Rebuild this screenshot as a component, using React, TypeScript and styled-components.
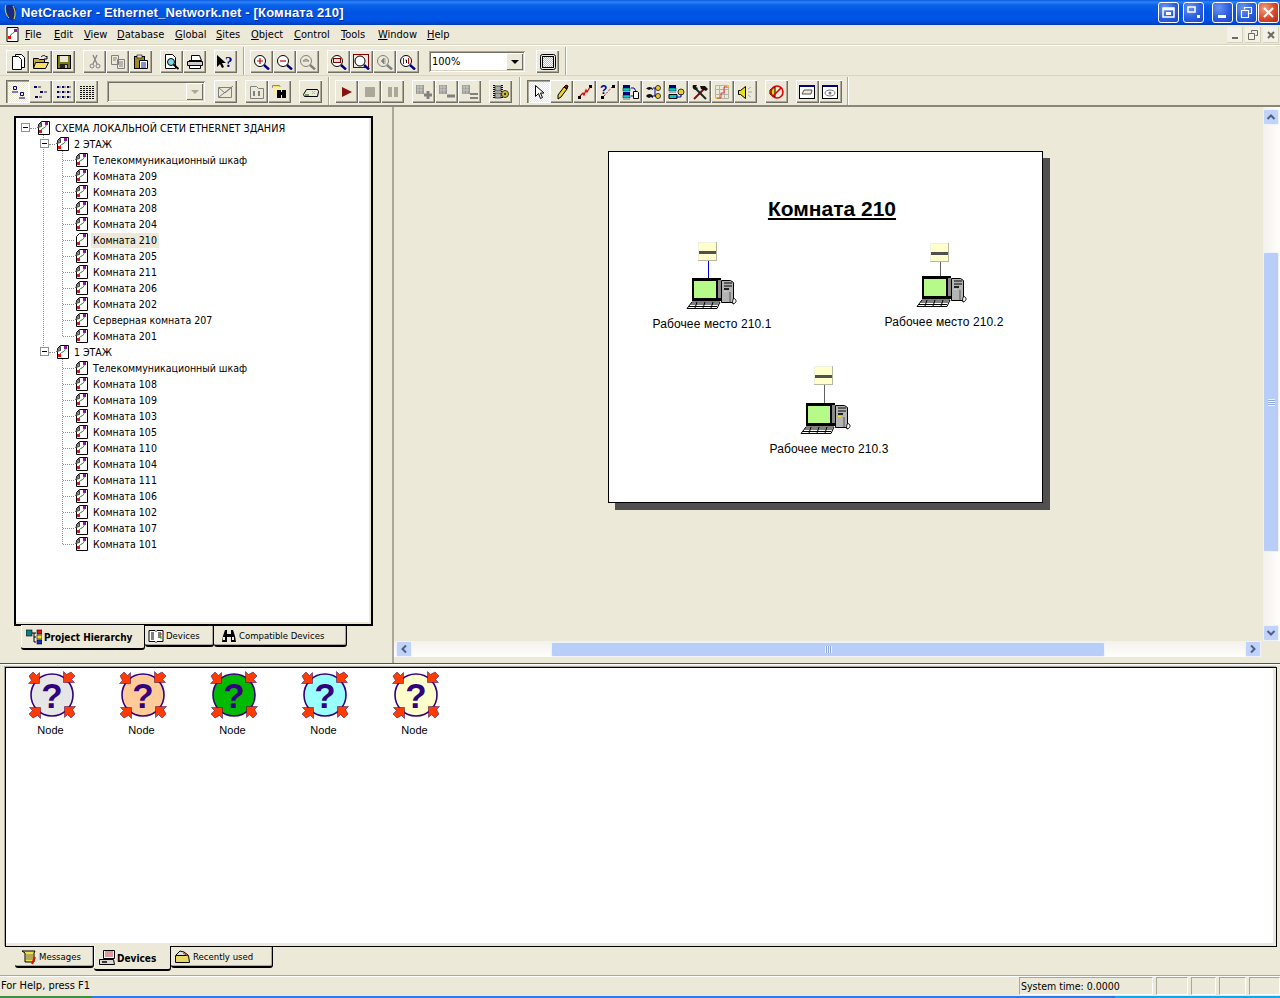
import React from 'react';
import styled, { createGlobalStyle } from 'styled-components';

const UI = `"DejaVu Sans Condensed", "Liberation Sans", sans-serif`;
const BG = '#ece9d8';

const Global = createGlobalStyle`
  html, body { margin: 0; padding: 0; overflow: hidden; background: ${BG}; }
  * { box-sizing: border-box; }
`;

const Win = styled.div`
  width: 1280px; height: 998px; background: ${BG}; display: flex; flex-direction: column;
  overflow: hidden; font: 11px ${UI}; color: #000;
`;

/* ---------- title bar ---------- */
const TitleBar = styled.div`
  height: 25px; flex: none; display: flex; align-items: center; padding: 0 0 0 3px;
  background: linear-gradient(180deg,#0a5ae0 0,#2d83f5 2px,#0a62ea 5px,#0054e3 12px,#0055e8 19px,#0048d0 23px,#003bb0 25px);
`;
const TitleText = styled.span`
  font: bold 13px "Liberation Sans", sans-serif; color: #fff; margin-left: 4px; flex: 1; letter-spacing: .16px;
  text-shadow: 1px 1px 0 #0a2f9c; white-space: nowrap;
`;
const CapBtn = styled.div<{ $ml: number; $red?: boolean }>`
  width: 21px; height: 21px; margin-left: ${p => p.$ml}px; border: 1px solid #fff; border-radius: 3px;
  display: flex; align-items: center; justify-content: center;
  background: ${p => p.$red
    ? 'radial-gradient(circle at 30% 30%,#f0a080,#d8482a 55%,#b02a10)'
    : 'radial-gradient(circle at 30% 25%,#6a94f0,#2a5ee0 55%,#1c44c0)'};
`;

/* ---------- menu ---------- */
const MenuBar = styled.div`
  height: 20px; flex: none; display: flex; align-items: center; padding-left: 5px;
  border-bottom: 1px solid #d8d4c0;
`;
const MenuItem = styled.span<{ $w: number }>`
  width: ${p => p.$w}px; flex: none; white-space: nowrap;
  & u { text-decoration: underline; }
`;
const Spacer = styled.div`flex: 1;`;
const MdiBtn = styled.div`
  width: 16px; height: 16px; margin-left: 2px; background: #f4f2e8; box-shadow: inset -1px -1px 0 #d4d0bc;
  display: flex; align-items: center; justify-content: center;
`;

/* ---------- toolbars ---------- */
const ToolRow = styled.div<{ $last?: boolean }>`
  height: ${p => (p.$last ? 32 : 30)}px; flex: none; display: flex; align-items: flex-start; padding-top: 4px; padding-left: 6px;
  border-top: 1px solid ${p => (p.$last ? '#d8d4c0' : '#fff')};
  border-bottom: ${p => (p.$last ? '2px solid #8a877a' : '0')};
`;
const Gap = styled.div<{ $w: number }>`width: ${p => p.$w}px; flex: none;`;
const Sep = styled.div<{ $ml: number; $mr: number }>`
  width: 2px; height: 28px; margin: -3px ${p => p.$mr}px 0 ${p => p.$ml}px; flex: none;
  background: linear-gradient(90deg,#aca899 50%,#fff 50%);
`;
const TB = styled.div<{ $on?: boolean }>`
  width: 23px; height: 23px; flex: none; display: flex; align-items: center; justify-content: center;
  background: ${p => (p.$on ? 'repeating-conic-gradient(#fff 0 25%,#ece9d8 0 50%) 0 0/2px 2px' : BG)};
  box-shadow: ${p => p.$on
    ? 'inset 1px 1px 0 #716f64, inset 2px 2px 0 #aca899, inset -1px -1px 0 #fff'
    : 'inset 1px 1px 0 #fff, inset -1px -1px 0 #716f64, inset -2px -2px 0 #aca899'};
`;
const Combo = styled.div<{ $w: number; $off?: boolean }>`
  width: ${p => p.$w}px; height: 21px; flex: none; margin-top: 1px; display: flex; align-items: center; justify-content: space-between;
  background: ${p => (p.$off ? BG : '#fff')};
  box-shadow: inset 1px 1px 0 #aca899, inset -1px -1px 0 #fff, inset 2px 2px 0 #716f64, inset -2px -2px 0 #d8d4c0;
  padding: 2px; font-size: 11px;
  & > span { padding-left: 1px; }
`;
const ComboBtn = styled.div<{ $off?: boolean }>`
  width: 17px; height: 17px; background: ${BG}; box-shadow: inset 1px 1px 0 #fff, inset -1px -1px 0 #716f64;
  display: flex; align-items: center; justify-content: center;
  &::after { content: ''; border: 4px solid transparent; border-top: 4px solid ${p => (p.$off ? '#aca899' : '#000')}; border-bottom: 0; }
`;

/* ---------- main ---------- */
const Main = styled.div`height: 557px; flex: none; display: flex; border-bottom: 1px solid #55534a;`;
const LeftPane = styled.div`
  width: 394px; flex: none; padding: 9px 0 0 14px; border-right: 2px solid #aca899;
  display: flex; flex-direction: column;
`;
const TreeBox = styled.div`
  width: 359px; height: 510px; background: #fff; padding: 2px 0 0 3px; flex: none; overflow: hidden;
  border: 2px solid #000;
  box-shadow: inset -2px -2px 0 #ece9d8, inset -3px -3px 0 #fff;
`;
const TreeRow = styled.div<{ $level: number }>`
  height: 16px; display: flex; align-items: center; position: relative; white-space: nowrap;
  padding-left: ${p => p.$level * 19 + 17}px;
  font-size: 10.5px;
`;
const Expander = styled.span<{ $left: number }>`
  position: absolute; left: ${p => p.$left}px; width: 9px; height: 9px; border: 1px solid #919191; background: #fff;
  top: 3px;
  &::after { content: ''; position: absolute; left: 1px; top: 3px; width: 5px; height: 1px; background: #000; }
`;
const Hline = styled.span<{ $left: number; $w: number }>`
  position: absolute; top: 8px; left: ${p => p.$left}px; width: ${p => p.$w}px; height: 0; border-top: 1px dotted #8f8f8f;
`;
const TreeLabel = styled.span<{ $sel?: boolean; $root?: boolean }>`
  margin-left: 2px; padding: 0 2px; height: 15px; line-height: 15px;
  font-size: ${p => (p.$root ? 10.75 : 10.5)}px;
  background: ${p => (p.$sel ? '#ece9d8' : 'transparent')};
`;
const Branch = styled.div<{ $left: number; $h: number }>`
  position: relative;
  &::before { content: ''; position: absolute; left: ${p => p.$left}px; top: -1px; height: ${p => p.$h}px; border-left: 1px dotted #8f8f8f; }
`;
const TabStrip = styled.div<{ $ml: number }>`display: flex; align-items: flex-start; padding-left: ${p => p.$ml}px; flex: none;`;
const Tab = styled.div<{ $w: number; $pl: number; $on?: boolean }>`
  width: ${p => p.$w}px; flex: none; height: ${p => (p.$on ? 25 : 21)}px; margin-top: ${p => (p.$on ? -1 : 0)}px;
  display: flex; align-items: center; gap: 2px; padding-left: ${p => p.$pl}px; padding-top: ${p => (p.$on ? 1 : 0)}px;
  background: ${BG}; white-space: nowrap; font-size: ${p => (p.$on ? 10 : 9.5)}px;
  font-weight: ${p => (p.$on ? 'bold' : 'normal')};
  border-right: 1px solid #000; border-bottom: 2px solid #000; border-radius: 0 0 3px 3px;
  box-shadow: ${p => (p.$on ? 'inset 1px 0 0 #fff' : 'inset -1px -1px 0 #aca899')};
`;

const RightPane = styled.div`flex: 1; min-width: 0; display: flex; flex-direction: column;`;
const CanvasRow = styled.div`height: 534px; flex: none; display: flex;`;
const Canvas = styled.div`flex: 1; min-width: 0; padding: 44px 0 0 214px;`;
const Page = styled.div`
  width: 435px; height: 352px; background: #fff; border: 1px solid #000; box-shadow: 7px 7px 0 #505050; position: relative;
  font-family: "Liberation Sans", sans-serif;
`;
const PageTitle = styled.div`
  text-align: center; font: bold 21px "Liberation Sans", sans-serif; text-decoration: underline; padding-top: 45px; margin-left: 13px;
`;
const DNode = styled.div<{ $x: number; $y: number; $svg: number; $lm: number }>`
  position: absolute; left: ${p => p.$x}px; top: ${p => p.$y}px; display: flex; flex-direction: column; align-items: center; width: 130px;
  & svg { margin-left: ${p => p.$svg}px; }
  & span { margin-top: ${p => p.$lm}px; }
`;
const DLabel = styled.span`font-size: 12px; letter-spacing: .12px; white-space: nowrap; line-height: 14px;`;

const VScroll = styled.div`
  width: 17px; flex: none; display: flex; flex-direction: column; padding: 2px 1px 0 0; background: linear-gradient(90deg,#f3f1ec,#fefefb);
`;
const VGap = styled.div<{ $h: number }>`height: ${p => p.$h}px; flex: none;`;
const SBtn = styled.div`
  width: 16px; height: 16px; flex: none; background: #c1d3fb; border: 1px solid #eef2fd; border-radius: 2px; display: flex; align-items: center; justify-content: center;
`;
const VThumb = styled.div`
  width: 16px; height: 300px; flex: none; background: #b9cdf9; border: 1px solid #eef2fd; border-radius: 2px; display: flex; align-items: center; justify-content: center;
`;
const HScroll = styled.div`
  height: 16px; flex: none; display: flex; align-items: center; padding: 0 0 0 2px; background: linear-gradient(180deg,#f3f1ec,#fefefb);
  margin-right: 19px;
`;
const HGap = styled.div<{ $w: number }>`width: ${p => p.$w}px; flex: none;`;
const HThumb = styled.div`
  width: 554px; height: 15px; flex: none; background: #b9cdf9; border: 1px solid #eef2fd; border-radius: 2px; display: flex; align-items: center; justify-content: center;
`;
const Grip = styled.div<{ $v?: boolean }>`
  width: 7px; height: 7px;
  background: ${p => (p.$v
    ? 'repeating-linear-gradient(180deg,#eef3ff 0 1px,#8ea6d8 1px 2px)'
    : 'repeating-linear-gradient(90deg,#eef3ff 0 1px,#8ea6d8 1px 2px)')};
`;

/* ---------- bottom ---------- */
const Bottom = styled.div`height: 311px; flex: none; padding: 2px 0 0 5px; border-top: 1px solid #fff; display: flex; flex-direction: column;`;
const DevList = styled.div`
  height: 280px; width: 1272px; flex: none; background: #fff; border: 1px solid #000;
  box-shadow: inset -3px -3px 0 #ece9d8, -1px -1px 0 #aca899;
  display: flex; align-items: flex-start; padding-top: 3px;
`;
const DevItem = styled.div`
  width: 91px; flex: none; display: flex; flex-direction: column; align-items: center; font-family: "Liberation Sans", sans-serif;
  &:first-child { margin-left: -1px; }
`;
const DevIcon = styled.div`margin-left: 3px; height: 48px;`;
const DevLabel = styled.span`font-size: 11px; line-height: 14px; margin-top: 4px;`;

/* ---------- status ---------- */
const Status = styled.div`
  height: 21px; flex: none; display: flex; align-items: center; border-top: 1px solid #aca899; box-shadow: inset 0 1px 0 #fff; padding: 0 0 1px 1px; font-size: 11px;
`;
const StatusText = styled.span`flex: 1; white-space: nowrap;`;
const Pane = styled.div<{ $w: number; $ml: number }>`
  width: ${p => p.$w}px; height: 18px; margin-left: ${p => p.$ml}px; flex: none; border: 1px solid #aca899; border-right-color: #fff; border-bottom-color: #fff;
  padding-left: 1px; line-height: 16px; white-space: nowrap; font-size: 10.5px;
`;
const Taskbar = styled.div`
  height: 3px; flex: none; background: linear-gradient(90deg,#3a8f3a 0 92px,#2c7ce8 92px 1115px,#12a5f0 1115px);
`;

/* ---------- icons ---------- */
const Svg: React.FC<{ w?: number; h?: number; children: React.ReactNode }> = ({ w = 16, h = 16, children }) => (
  <svg width={w} height={h} viewBox={`0 0 ${w} ${h}`} style={{ display: 'block', flex: 'none' }}>{children}</svg>
);

const Doc = ({ plain }: { plain?: boolean }) => (
  <Svg w={15} h={16}>
    <path d="M5.5 1.5h8v13h-11v-10z" fill="#fff" stroke="#000" />
    {!plain && <path d="M1.5 7.5l4-5v4z" fill="#999" stroke="#444" />}
    <path d="M4.5 11.5C5 7 11 9 10 4" fill="none" stroke="#0a8a2a" />
    <rect x="9" y="2" width="3" height="3" fill="#8a1a9a" />
    <rect x="3" y="10" width="3" height="3" fill="#e81010" />
  </Svg>
);

const AppIcon = () => (
  <Svg w={15} h={17}>
    <path d="M2 1.5h11v14h-11z" fill="#fff" stroke="#000" />
    <path d="M5 11C5 7 10 8 10 4" fill="none" stroke="#0a8a2a" />
    <rect x="9" y="3" width="3" height="3" fill="#8a1a9a" />
    <rect x="3" y="10" width="3" height="3" fill="#e81010" />
  </Svg>
);

const LogoIcon = () => (
  <Svg w={14} h={18}>
    <path d="M3 1h7l3 4-3 12-6-3z" fill="#1a2a80" />
    <path d="M3 1c-2 4 0 10 3 13M10 2c2 4 3 8 1 13" fill="none" stroke="#f0e020" />
  </Svg>
);

const D = '#808080';
const NewIco = () => <Svg><path d="M5.5 .5h6l3 3v10h-9z" fill="#fff" stroke="#000"/><path d="M2.5 2.5h6l3 3v10h-9z" fill="#fff" stroke="#000"/></Svg>;
const OpenIco = () => <Svg w={18}><path d="M1.5 4.500h5l1 1h5v8h-11z" fill="#c4a838" stroke="#000"/><path d="M3.500 8.500h13l-3 6h-12z" fill="#f8e060" stroke="#000"/><path d="M9 3c2-2 4-2 5 0l1-1v3h-3" fill="none" stroke="#000"/></Svg>;
const SaveIco = () => <Svg><rect x="1.5" y="1.5" width="13" height="13" fill="#7a7a10" stroke="#000"/><rect x="4" y="2" width="8" height="6" fill="#e8e8d8"/><rect x="4" y="10" width="8" height="4" fill="#222"/><rect x="9" y="11" width="2" height="3" fill="#bbb"/></Svg>;
const CutIco = () => <Svg><path d="M6 1l4 9M10 1l-4 9" stroke={D} fill="none" strokeWidth="1.2"/><circle cx="5" cy="12" r="2" fill="none" stroke={D}/><circle cx="11" cy="12" r="2" fill="none" stroke={D}/></Svg>;
const CopyIco = () => <Svg><path d="M1.5 1.5h7v9h-7z M7.5 5.5h7v9h-7z" fill="#ece9d8" stroke={D}/><path d="M3 4h4M3 6h3M9 8h4M9 10h4M9 12h4" stroke={D}/></Svg>;
const PasteIco = () => <Svg><rect x="1.5" y="2.5" width="10" height="12" fill="#a08a20" stroke="#000"/><rect x="4" y="1" width="5" height="3" fill="#ddd" stroke="#000" strokeWidth=".6"/><path d="M6.5 6.5h8v8h-8z" fill="#fff" stroke="#000"/><path d="M8 9h5M8 11h5M8 13h5" stroke="#0020a0"/></Svg>;
const PreviewIco = () => <Svg w={18}><path d="M2.5 .5h7l3 3v11h-10z" fill="#fff" stroke="#000"/><circle cx="8" cy="8" r="3.5" fill="#7fd8e8" stroke="#000"/><path d="M10.5 10.5l5 4.5" stroke="#000" strokeWidth="2"/></Svg>;
const PrintIco = () => <Svg w={18}><path d="M5.5 1.5h8l2 5h-10z" fill="#fff" stroke="#000"/><path d="M1.5 7.5h15v4h-15z" fill="#ccc" stroke="#000"/><path d="M3.5 11.5h11v3h-11z" fill="#fff" stroke="#000"/><path d="M3 6.5h12" stroke="#000"/></Svg>;
const HelpIco = () => <Svg w={19}><path d="M1 1v12l3-3 2 4 2-1-2-4h4z" fill="#000"/><text x="9" y="13" fontFamily="Liberation Serif, serif" fontWeight="bold" fontSize="15" fill="#000080">?</text></Svg>;
const Mag: React.FC<{ off?: boolean; children?: React.ReactNode }> = ({ off, children }) => (
  <Svg w={18}>
    <circle cx="7" cy="7" r="5.500" fill={off ? 'none' : '#fff'} stroke={off ? D : '#000'} />
    {children}
    <path d="M11 11l5 4.500" stroke={off ? D : '#000080'} strokeWidth="2.4" />
  </Svg>
);
const R = '#c00000';
const ZoomIn = () => <Mag><path d="M4 7h6M7 4v6" stroke={R} strokeWidth="1.2"/></Mag>;
const ZoomOut = () => <Mag><path d="M4 7h6" stroke={R} strokeWidth="1.2"/></Mag>;
const ZoomOff = () => <Mag off><path d="M4 7l3-2 3 2M4 7h6" stroke={D} fill="none"/></Mag>;
const ZoomRect = () => <Mag><rect x="3.500" y="4.500" width="7" height="4" fill="#e8d8d8" stroke="#800000"/></Mag>;
const ZoomBig = () => <Svg w={18}><rect x=".5" y=".5" width="15" height="13" fill="none" stroke="#800000"/><circle cx="7" cy="7" r="5" fill="#fff" stroke="#000"/><path d="M11 11l5 4.500" stroke="#000080" strokeWidth="2.4"/></Svg>;
const ZoomPrev = () => <Mag off><path d="M8 4l-3 3 3 3zM9 4v6" fill={D} stroke={D} strokeWidth=".6"/></Mag>;
const ZoomFit = () => <Mag><path d="M4.500 4v6M9.500 4v6" stroke={R}/><path d="M6.500 6h1v3" stroke="#000" fill="none"/></Mag>;
const FitIco = () => (
  <Svg>
    <defs><pattern id="cy" width="2" height="2" patternUnits="userSpaceOnUse"><rect width="2" height="2" fill="#5fe0f0"/><rect width="1" height="1" fill="#fff"/><rect x="1" y="1" width="1" height="1" fill="#fff"/></pattern></defs>
    <rect x=".5" y=".5" width="15" height="15" rx="2" fill="#ece9d8" stroke="#000"/>
    <rect x="2.500" y="2.500" width="11" height="11" fill="url(#cy)" stroke="#000"/>
  </Svg>
);

const Bl = '#000080';
const V1 = () => <Svg><path d="M3.500 2.500h3v3h-3z" fill="none" stroke={Bl}/><path d="M2 8h6" stroke={Bl}/><path d="M10.500 8.500h3v3h-3z" fill="none" stroke={Bl}/><path d="M9 14h6" stroke={Bl}/></Svg>;
const V2 = () => <Svg><path d="M1 3h3M7 8h3M2 13h3" stroke={Bl} strokeWidth="2"/><path d="M5 3h3M11 8h3M6 13h3" stroke="#222"/></Svg>;
const V3 = () => <Svg>{[3, 8, 13].map(y => <g key={y}>{[1, 6, 11].map(x => <path key={x} d={`M${x} ${y}h2`} stroke={Bl} strokeWidth="2"/>)}{[3, 8, 13].map(x => <path key={x} d={`M${x} ${y}h2`} stroke="#555"/>)}</g>)}</Svg>;
const V4 = () => <Svg>{[2, 4, 6, 8, 10, 12, 14].map(y => <path key={y} d={`M1 ${y + .5}h14`} stroke="#111" strokeDasharray="2 1"/>)}</Svg>;
const MailOff = () => <Svg w={18}><path d="M1.5 3.5h13v10h-13z" fill="none" stroke={D}/><path d="M2 4l6 5 7-6M2 13l14-11" stroke={D} fill="none"/></Svg>;
const NetOff = () => <Svg w={18}><path d="M2.5 2.5h6l2 2h5v10h-13z" fill="none" stroke={D}/><path d="M5 7h2v5h-2zM10 7h2v5h-2z" fill={D}/></Svg>;
const Find = () => <Svg w={18}><path d="M1.5 1.5h7l1 2h-8z" fill="#f0e060" stroke="#888"/><rect x="2" y="3" width="8" height="6" fill="#f8f0a0"/><rect x="6" y="6" width="4" height="8" fill="#000"/><rect x="11" y="6" width="4" height="8" fill="#000"/><rect x="9" y="8" width="3" height="3" fill="#000"/></Svg>;
const Tag = () => <Svg w={18}><path d="M1.500 10.500l3-5h11l1 2-1 5h-13z" fill="#ece9d8" stroke="#000"/><path d="M3 11h4" stroke="#2a8a2a" strokeWidth="1.4"/><path d="M10 7l3 3M13 7l-3 3" stroke="#e0c000"/></Svg>;
const Play = () => <Svg><path d="M3 3l10 5-10 5z" fill="#8a1010"/></Svg>;
const Stop = () => <Svg><rect x="3" y="3" width="10" height="10" fill="#aca899"/></Svg>;
const Pause = () => <Svg><rect x="3" y="3" width="4" height="10" fill="#aca899"/><rect x="9" y="3" width="4" height="10" fill="#aca899"/></Svg>;
const GrayBlock: React.FC<{ k: number }> = ({ k }) => <Svg w={18}><rect x="1" y="1" width="8" height="9" fill={D} opacity=".75"/><path d="M2 3h6M2 6h6M3 1v9M6 1v9" stroke="#ddd" strokeWidth=".6"/>{k === 0 && <path d="M9 11h8M13 7v8" stroke={D} strokeWidth="3"/>}{k === 1 && <path d="M9 12h8" stroke={D} strokeWidth="3"/>}{k === 2 && <path d="M9 10h8M9 14h8" stroke={D} strokeWidth="2"/>}</Svg>;
const Film = () => <Svg w={18}><path d="M2 1v14M10 1v14" stroke="#000" strokeDasharray="1 1" strokeWidth="2"/><rect x="3" y="2" width="6" height="5" fill="#aaa" stroke="#000" strokeWidth=".6"/><rect x="3" y="9" width="6" height="5" fill="#aaa" stroke="#000" strokeWidth=".6"/><circle cx="13" cy="10" r="3.500" fill="#d8c020" stroke="#333"/><circle cx="13" cy="10" r="1.200" fill="#333"/></Svg>;
const Cursor = () => <Svg><path d="M4.500 1.500v11l3-3 2 5 2-1-2-4.500h3.500z" fill="#fff" stroke="#000"/></Svg>;
const Pencil = () => <Svg><path d="M10 3l3 2-6 8-3 2 0-4z" fill="#f0d020" stroke="#000"/><path d="M10 3l3 2 1-3-2-1z" fill="#8a1010" stroke="#000"/></Svg>;
const Link1 = () => <Svg><rect x="1" y="12" width="3" height="3"/><rect x="12" y="1" width="3" height="3"/><path d="M3 12l3-3 1 2 2-5 1 2 3-5" stroke="#e00000" fill="none" strokeWidth="1.2"/></Svg>;
const Link2 = () => <Svg><rect x="1" y="12" width="3" height="3"/><rect x="12" y="1" width="3" height="3"/><path d="M4 12l8-9" stroke="#e00000" strokeDasharray="2 1.500"/><text x="0" y="10" fontFamily="Liberation Sans, sans-serif" fontWeight="bold" fontSize="12" fill="#0000a0">?</text></Svg>;
const Pc: React.FC<{ x: number; y: number }> = ({ x, y }) => <g><rect x={x} y={y} width="7" height="3" fill="#000080"/><rect x={x} y={y + 3} width="7" height="3" fill="#00d0d0" stroke="#000" strokeWidth=".5"/><rect x={x} y={y + 6} width="7" height="2" fill="#aaa"/></g>;
const Net1 = () => <Svg w={18}><Pc x={1} y={1}/><Pc x={1} y={8}/><path d="M9 4h3l2 3" fill="none" stroke="#0000c0"/><path d="M11.500 7.500h4l1 1v6h-5z" fill="#fff" stroke="#000"/><path d="M9 12h2" stroke="#0000c0"/></Svg>;
const Net2 = () => <Svg w={18}><path d="M1 5a4 4 0 0 1 7 0v1l-2-1-2 1-2-1zM1 12a4 4 0 0 1 7 0v2l-2-1-2 1-2-1z" fill="#111"/><circle cx="13" cy="4" r="2.500" fill="#e8d020" stroke="#333"/><circle cx="13" cy="12" r="2.500" fill="#e8d020" stroke="#333"/><path d="M8 4h3M8 12h3M10 4v8" stroke="#0000c0" fill="none"/></Svg>;
const Net3 = () => <Svg w={18}><Pc x={1} y={1}/><path d="M1 10.500h8v4h-8z" fill="#00c8c8" stroke="#000"/><circle cx="13" cy="8" r="3" fill="#e8d020" stroke="#333"/><path d="M8 13h5v-3" stroke="#0000c0" fill="none"/></Svg>;
const Tools = () => <Svg w={18}><path d="M3 15l10-10" stroke="#801010" strokeWidth="2"/><path d="M9 2h5l3 3-2 2-2-1-3-1z" fill="#111"/><path d="M15 15L5 5" stroke="#222" strokeWidth="2"/><path d="M2 1c-1 2 0 5 3 5l2-2-2-1 1-2z" fill="#111"/></Svg>;
const Grid = () => <Svg w={18}><path d="M1.500 1.500h13v13h-13zM1.500 5.500h13M1.500 10.500h13M5.500 1.500v13M10.500 1.500v13" fill="none" stroke="#b5b2a6"/><path d="M2 14h5v-5h3v-6h4" fill="none" stroke="#e83030"/><rect x="13" y="1" width="2" height="2" fill="#e8d020"/><rect x="1" y="13" width="2" height="2" fill="#e8d020"/></Svg>;
const Speak = () => <Svg w={18}><path d="M1.500 6.500h2l5-4v12l-5-4h-2z" fill="#e8e020" stroke="#000"/><path d="M11 5l3-2M11 8h4M11 11l3 2" stroke="#aaa"/></Svg>;
const NoIco = () => <Svg w={18}><path d="M2 6l5-3v10l-5-3z" fill="#e8d020" stroke="#000"/><circle cx="9" cy="8" r="6" fill="none" stroke="#e00000" strokeWidth="1.6"/><path d="M5 12l8-8" stroke="#e00000" strokeWidth="1.6"/></Svg>;
const WinTag = () => <Svg w={17}><rect x=".5" y="1.500" width="15" height="13" fill="#fff" stroke="#000"/><rect x="1" y="1" width="15" height="2" fill="#000080"/><path d="M3 10l2-4h8l-1 4z" fill="#ece9d8" stroke="#555"/></Svg>;
const WinEye = () => <Svg w={17}><rect x=".5" y="1.500" width="15" height="13" fill="#fff" stroke="#000"/><rect x="1" y="1" width="15" height="2" fill="#000080"/><ellipse cx="8" cy="9" rx="5" ry="3" fill="none" stroke="#777"/><circle cx="8" cy="9" r="1.500" fill="#777"/></Svg>;

const HierIco = () => <Svg w={16}><rect x="0" y="1" width="6" height="6" fill="#0a8080" stroke="#000" strokeWidth=".6"/><path d="M6 4h4M8 4v9h2M8 8h2" stroke="#000" fill="none"/><rect x="11" y="1" width="5" height="4" fill="#e81010" stroke="#000" strokeWidth=".6"/><rect x="11" y="6" width="5" height="4" fill="#f0e020" stroke="#000" strokeWidth=".6"/><rect x="11" y="11" width="5" height="4" fill="#1030d0" stroke="#000" strokeWidth=".6"/></Svg>;
const BookIco = () => <Svg w={16} h={14}><path d="M1 1.500h6l1 1 1-1h6v11h-6l-1 1-1-1h-6z" fill="#fff" stroke="#000"/><path d="M3 4h3M3 6h3M3 8h3M3 10h3M10 4h3M10 6h3M10 8h3" stroke="#000"/><path d="M13 4v2" stroke="#e01010"/><path d="M13 7v3" stroke="#10a010"/></Svg>;
const BinoIco = () => <Svg w={16} h={14}><path d="M2 7l2-6h2v12h-5z M14 7l-2-6h-2v12h5z" fill="#000"/><rect x="6" y="5" width="4" height="3" fill="#000"/><rect x="2" y="8" width="2" height="3" fill="#eee"/><rect x="11" y="8" width="2" height="3" fill="#eee"/></Svg>;
const MsgIco = () => <Svg w={16}><path d="M1 2h13l-1 2v9h-9v-9z" fill="#f0e040" stroke="#000"/><path d="M5 6h7M5 8h7M5 10h7" stroke="#776"/><path d="M14 8l-3 7" stroke="#e01010" strokeWidth="2"/></Svg>;
const DevIco = () => <Svg w={16} h={18}><path d="M4.500 1.500h11v8h-11z" fill="#fff" stroke="#000"/><path d="M6 3h8M6 5h8M6 7h8" stroke="#c03030"/><path d="M.5 10.500h14l1 5h-15z" fill="#d8d8d0" stroke="#000"/><path d="M3 13h5" stroke="#000" strokeWidth="1.500"/></Svg>;
const RecentIco = () => <Svg w={17} h={15}><path d="M2 6l4-4 4 1 4 3" fill="#ddd" stroke="#000"/><path d="M1.500 6.500h13l1 7h-14z" fill="#e8d860" stroke="#000"/><path d="M9 4l5 3" stroke="#e01010"/></Svg>;

const Computer = ({ wire, dy, hx }: { wire: string; dy: number; hx: number }) => (
  <Svg w={52} h={70}>
    <g transform={`translate(${hx} 0)`}>
      <rect x="12" y="0" width="19" height="19" fill="#ffffcc" />
      <path d="M12 .5h19M12.500 0v19" stroke="#f0f0e0" />
      <path d="M30.500 0v19M12 18.500h19" stroke="#b8b8a0" />
      <rect x="13" y="9" width="17" height="3" fill="#505050" />
      <path d={`M22.500 19v${17 + dy}`} stroke={wire} />
    </g>
    <g transform={`translate(0 ${dy})`}>
      <rect x="6" y="36" width="29" height="23" fill="#000" />
      <rect x="8" y="39" width="22" height="17" fill="#b6fb8a" />
      <path d="M32 38h3v18h-3z" fill="#888" />
      <path d="M35.500 38.500h9l3 2v20h-12z" fill="#b4b4b4" stroke="#000" />
      <path d="M38 41h8M38 44h8" stroke="#000" />
      <rect x="38" y="46" width="5" height="2" fill="#222" />
      <rect x="38" y="49" width="3" height="1" fill="#f0e020" />
      <path d="M44 50v10" stroke="#555" />
      <path d="M47 62c3-1 4-3 2-5s-3 3-2 5z" fill="#fff" stroke="#000" />
      <path d="M6 60h28l-3 6.500h-30z" fill="#fff" stroke="#000" />
      <path d="M4.500 62h28M3 64.500h28M11 60l-2 6M19 60l-2 6M27 60l-2 6" stroke="#000" />
    </g>
  </Svg>
);

const NodeIco = ({ c }: { c: string }) => {
  const arrow = (r: number) => (
    <g transform={`rotate(${r} 24 24)`} key={r}>
      <path d="M1 5l4-4 3.500 3.500 3-3v11h-11l3-3z" fill="#ff3c00" stroke="#330066" strokeWidth=".5" />
    </g>
  );
  return (
    <Svg w={48} h={48}>
      <circle cx="24" cy="24" r="21" fill={c} stroke="#330080" strokeWidth="1.600" />
      <text x="24" y="37" textAnchor="middle" fontFamily="Liberation Sans, sans-serif" fontWeight="bold" fontSize="35" fill="#330080">?</text>
      {[0, 90, 180, 270].map(arrow)}
    </Svg>
  );
};

const Chevron = ({ d }: { d: 'u' | 'd' | 'l' | 'r' }) => {
  const rot = { u: 0, d: 180, l: 270, r: 90 }[d];
  return <svg width="10" height="10" viewBox="0 0 10 10" style={{ transform: `rotate(${rot}deg)`, display: 'block' }}><path d="M1.500 7L5 3.500 8.500 7" fill="none" stroke="#4d6185" strokeWidth="2" /></svg>;
};

/* ---------- data ---------- */
const menu: [string, string, number][] = [
  ['F', 'ile', 28], ['E', 'dit', 30], ['V', 'iew', 33], ['D', 'atabase', 58], ['G', 'lobal', 41], ['S', 'ites', 36], ['O', 'bject', 43], ['C', 'ontrol', 47], ['T', 'ools', 37], ['W', 'indow', 50], ['H', 'elp', 40],
];
const floor2 = ['Телекоммуникационный шкаф', 'Комната 209', 'Комната 203', 'Комната 208', 'Комната 204', 'Комната 210', 'Комната 205', 'Комната 211', 'Комната 206', 'Комната 202', 'Серверная комната 207', 'Комната 201'];
const floor1 = ['Телекоммуникационный шкаф', 'Комната 108', 'Комната 109', 'Комната 103', 'Комната 105', 'Комната 110', 'Комната 104', 'Комната 111', 'Комната 106', 'Комната 102', 'Комната 107', 'Комната 101'];
const nodes = ['#e6e6e6', '#ffcc99', '#00bb00', '#99ffff', '#ffffcc'];

const Leaves = ({ items }: { items: string[] }) => (
  <>
    {items.map((t, i) => (
      <TreeRow $level={2} key={i}>
        <Hline $left={44} $w={11} />
        <Doc plain={t === 'Комната 210'} />
        <TreeLabel $sel={t === 'Комната 210'}>{t}</TreeLabel>
      </TreeRow>
    ))}
  </>
);

const Tree = () => (
  <>
    <TreeRow $level={0}>
      <Expander $left={2} />
      <Hline $left={11} $w={6} />
      <Doc />
      <TreeLabel $root>СХЕМА ЛОКАЛЬНОЙ СЕТИ ETHERNET ЗДАНИЯ</TreeLabel>
    </TreeRow>
    <Branch $left={24} $h={217}>
      <TreeRow $level={1}>
        <Expander $left={21} />
        <Hline $left={30} $w={6} />
        <Doc />
        <TreeLabel>2 ЭТАЖ</TreeLabel>
      </TreeRow>
      <Branch $left={43} $h={185}><Leaves items={floor2} /></Branch>
      <TreeRow $level={1}>
        <Expander $left={21} />
        <Hline $left={30} $w={6} />
        <Doc />
        <TreeLabel>1 ЭТАЖ</TreeLabel>
      </TreeRow>
      <Branch $left={43} $h={185}><Leaves items={floor1} /></Branch>
    </Branch>
  </>
);

export default function App() {
  return (
    <Win>
      <Global />
      <TitleBar>
        <LogoIcon />
        <TitleText>NetCracker - Ethernet_Network.net - [Комната 210]</TitleText>
        <CapBtn $ml={0}><svg width="13" height="11"><path d="M1 1h11v9h-11zM1 2.500h11" fill="none" stroke="#fff" strokeWidth="1.500"/><rect x="4" y="5" width="5" height="3" fill="#fff"/></svg></CapBtn>
        <CapBtn $ml={4}><svg width="13" height="13"><path d="M1 1h7v5h-7z" fill="none" stroke="#fff" strokeWidth="1.500"/><rect x="10" y="9" width="3" height="3" fill="#fff"/></svg></CapBtn>
        <CapBtn $ml={8}><svg width="13" height="13"><rect x="2" y="9" width="8" height="3" fill="#fff"/></svg></CapBtn>
        <CapBtn $ml={3}><svg width="13" height="13"><path d="M4.500 3.500v-2h7v6h-2M1.500 4.500h7v7h-7z" fill="none" stroke="#fff" strokeWidth="1.200"/></svg></CapBtn>
        <CapBtn $ml={1} $red><svg width="13" height="13"><path d="M2 2l9 9M11 2l-9 9" stroke="#fff" strokeWidth="2"/></svg></CapBtn>
        <Gap $w={1} />
      </TitleBar>

      <MenuBar>
        <AppIcon />
        <Gap $w={5} />
        {[['F', 'ile', 29], ['E', 'dit', 30], ['V', 'iew', 33], ['D', 'atabase', 58], ['G', 'lobal', 41], ['S', 'ites', 35], ['O', 'bject', 43], ['C', 'ontrol', 47], ['T', 'ools', 37], ['W', 'indow', 49], ['H', 'elp', 40]].map(([a, b, w]) => (
          <MenuItem key={a as string} $w={w as number}><u>{a}</u>{b}</MenuItem>
        ))}
        <Spacer />
        <MdiBtn><svg width="10" height="10"><rect x="2" y="7" width="6" height="2" fill="#6c6c60"/></svg></MdiBtn>
        <MdiBtn><svg width="10" height="10"><path d="M3.500 2.500v-2h6v5h-2M.5 3.500h6v6h-6z" fill="none" stroke="#6c6c60"/></svg></MdiBtn>
        <MdiBtn><svg width="10" height="10"><path d="M2 2l6 6M8 2l-6 6" stroke="#6c6c60" strokeWidth="2"/></svg></MdiBtn>
        <Gap $w={1} />
      </MenuBar>

      <ToolRow>
        <TB><NewIco /></TB><TB><OpenIco /></TB><TB><SaveIco /></TB>
        <Gap $w={8} />
        <TB><CutIco /></TB><TB><CopyIco /></TB><TB><PasteIco /></TB>
        <Gap $w={8} />
        <TB><PreviewIco /></TB><TB><PrintIco /></TB>
        <Gap $w={8} />
        <TB><HelpIco /></TB>
        <Sep $ml={6} $mr={5} />
        <TB><ZoomIn /></TB><TB><ZoomOut /></TB><TB><ZoomOff /></TB>
        <Gap $w={8} />
        <TB><ZoomRect /></TB><TB><ZoomBig /></TB><TB><ZoomPrev /></TB><TB><ZoomFit /></TB>
        <Gap $w={10} />
        <Combo $w={96}><span>100%</span><ComboBtn /></Combo>
        <Gap $w={11} />
        <TB><FitIco /></TB>
        <Sep $ml={6} $mr={0} />
      </ToolRow>

      <ToolRow $last>
        <TB $on><V1 /></TB><TB><V2 /></TB><TB><V3 /></TB><TB><V4 /></TB>
        <Gap $w={9} />
        <Combo $w={98} $off><span /><ComboBtn $off /></Combo>
        <Gap $w={9} />
        <TB><MailOff /></TB>
        <Gap $w={8} />
        <TB><NetOff /></TB><TB><Find /></TB>
        <Gap $w={8} />
        <TB><Tag /></TB>
        <Sep $ml={6} $mr={5} />
        <TB><Play /></TB><TB><Stop /></TB><TB><Pause /></TB>
        <Gap $w={8} />
        <TB><GrayBlock k={0} /></TB><TB><GrayBlock k={1} /></TB><TB><GrayBlock k={2} /></TB>
        <Gap $w={8} />
        <TB><Film /></TB>
        <Sep $ml={7} $mr={6} />
        <TB $on><Cursor /></TB><TB><Pencil /></TB><TB><Link1 /></TB><TB><Link2 /></TB><TB><Net1 /></TB><TB><Net2 /></TB><TB><Net3 /></TB><TB><Tools /></TB><TB><Grid /></TB><TB><Speak /></TB>
        <Gap $w={8} />
        <TB><NoIco /></TB>
        <Gap $w={8} />
        <TB><WinTag /></TB><TB><WinEye /></TB>
        <Sep $ml={5} $mr={0} />
      </ToolRow>

      <Main>
        <LeftPane>
          <TreeBox><Tree /></TreeBox>
          <TabStrip $ml={7}>
            <Tab $w={124} $pl={5} $on><HierIco />Project Hierarchy</Tab>
            <Tab $w={69} $pl={3}><BookIco />Devices</Tab>
            <Tab $w={133} $pl={7}><BinoIco />Compatible Devices</Tab>
          </TabStrip>
        </LeftPane>
        <RightPane>
          <CanvasRow>
            <Canvas>
              <Page>
                <PageTitle>Комната 210</PageTitle>
                <DNode $x={38} $y={90} $svg={-1} $lm={5}><Computer wire="#0000e0" dy={0} hx={0} /><DLabel>Рабочее место 210.1</DLabel></DNode>
                <DNode $x={270} $y={91} $svg={-5} $lm={2}><Computer wire="#606060" dy={-3} hx={2} /><DLabel>Рабочее место 210.2</DLabel></DNode>
                <DNode $x={155} $y={214} $svg={-7} $lm={6}><Computer wire="#606060" dy={1} hx={2} /><DLabel>Рабочее место 210.3</DLabel></DNode>
              </Page>
            </Canvas>
            <VScroll>
              <SBtn><Chevron d="u" /></SBtn>
              <VGap $h={127} />
              <VThumb><Grip $v /></VThumb>
              <VGap $h={73} />
              <SBtn><Chevron d="d" /></SBtn>
            </VScroll>
          </CanvasRow>
          <HScroll>
            <SBtn><Chevron d="l" /></SBtn>
            <HGap $w={139} />
            <HThumb><Grip /></HThumb>
            <Spacer />
            <SBtn><Chevron d="r" /></SBtn>
          </HScroll>
        </RightPane>
      </Main>

      <Bottom>
        <DevList>
          {nodes.map((c, i) => (
            <DevItem key={i}>
              <DevIcon><NodeIco c={c} /></DevIcon>
              <DevLabel>Node</DevLabel>
            </DevItem>
          ))}
        </DevList>
        <TabStrip $ml={10}>
          <Tab $w={79} $pl={6}><MsgIco />Messages</Tab>
          <Tab $w={77} $pl={5} $on><DevIco />Devices</Tab>
          <Tab $w={102} $pl={3}><RecentIco />Recently used</Tab>
        </TabStrip>
      </Bottom>

      <Status>
        <StatusText>For Help, press F1</StatusText>
        <Pane $w={134} $ml={0}>System time: 0.0000</Pane>
        <Pane $w={32} $ml={3} />
        <Pane $w={25} $ml={3} />
        <Pane $w={27} $ml={3} />
        <Pane $w={31} $ml={3} />
      </Status>
      <Taskbar />
    </Win>
  );
}
